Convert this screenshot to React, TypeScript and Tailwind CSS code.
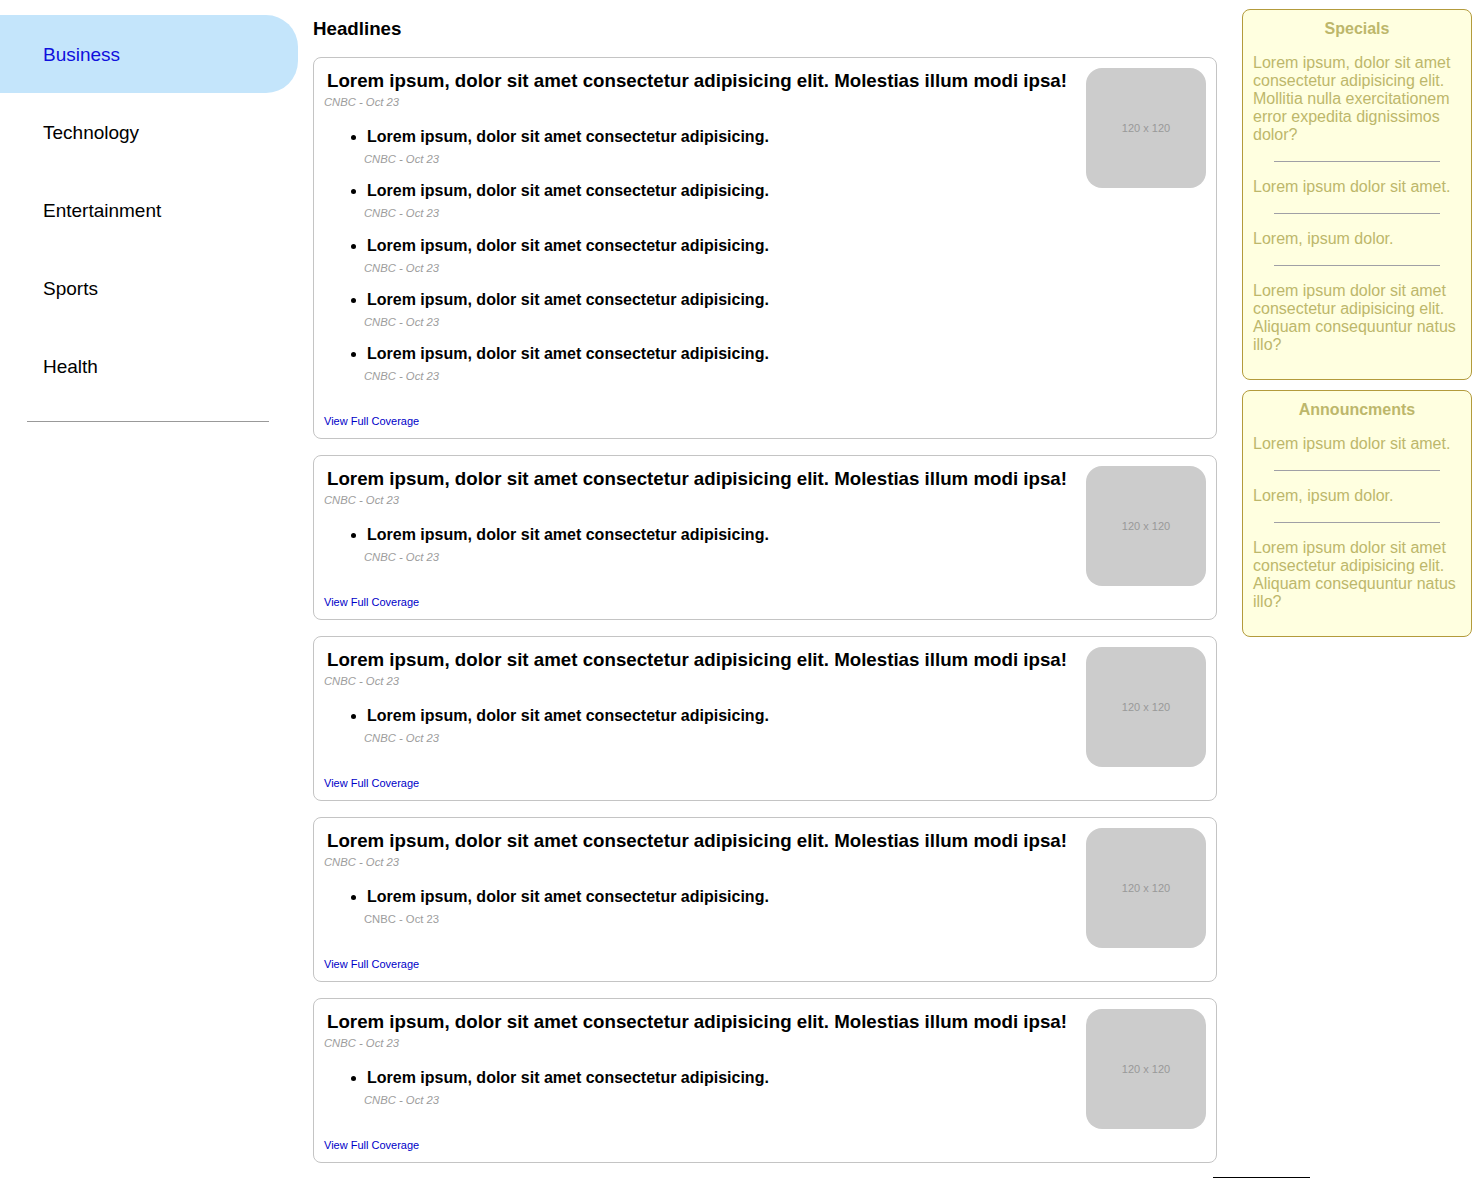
const categories = ["Business", "Technology", "Entertainment", "Sports", "Health"];

const stories = [
  { subs: 5, italic: true },
  { subs: 1, italic: true },
  { subs: 1, italic: true },
  { subs: 1, italic: false },
  { subs: 1, italic: true },
];

const specials = [
  "Lorem ipsum, dolor sit amet consectetur adipisicing elit. Mollitia nulla exercitationem error expedita dignissimos dolor?",
  "Lorem ipsum dolor sit amet.",
  "Lorem, ipsum dolor.",
  "Lorem ipsum dolor sit amet consectetur adipisicing elit. Aliquam consequuntur natus illo?",
];

const announcements = [
  "Lorem ipsum dolor sit amet.",
  "Lorem, ipsum dolor.",
  "Lorem ipsum dolor sit amet consectetur adipisicing elit. Aliquam consequuntur natus illo?",
];

function SideBox({ title, items }: { title: string; items: string[] }) {
  return (
    <div className="border border-[#b39b3c] bg-[#ffffe0] rounded-lg px-[10px] pt-[10px] pb-[25px] text-[#bdb76b] text-[16px] leading-[18px]">
      <h4 className="font-bold text-center mb-4">{title}</h4>
      {items.map((t, i) => (
        <div key={i}>
          {i > 0 && <hr className="w-[80%] mx-auto mt-[17px] mb-[16px] border-0 border-t border-[#a0a0a6]" />}
          <p>{t}</p>
        </div>
      ))}
    </div>
  );
}

function StoryCard({ subs, italic }: { subs: number; italic: boolean }) {
  return (
    <div className="border border-[#c4c4c4] rounded-lg p-[10px] flex gap-4 mb-4">
      <div className="flex-1">
        <h3 className="text-[18.72px] font-bold leading-[26px] pl-[3px] text-black">
          Lorem ipsum, dolor sit amet consectetur adipisicing elit. Molestias illum modi ipsa!
        </h3>
        <p className="text-[11.25px] italic leading-[16px] text-[#9d9d9d]">CNBC - Oct 23</p>
        <ul className="list-disc pl-[43px] mt-[18px] text-[16px] leading-[18px]">
          {Array.from({ length: subs }).map((_, i) => (
            <li key={i} className={`leading-[18px] ${i > 0 ? "mt-[15.25px]" : ""}`}>
              <p className="text-[16px] font-bold leading-[18px] text-black">
                Lorem ipsum, dolor sit amet consectetur adipisicing.
              </p>
              <p className={`text-[11.25px] leading-[16px] text-[#9d9d9d] mt-[5px] -ml-[3px] ${italic ? "italic" : ""}`}>
                CNBC - Oct 23
              </p>
            </li>
          ))}
        </ul>
        <a href="#" className="block mt-[30px] text-[11px] leading-[14px] text-[#0000c8]">
          View Full Coverage
        </a>
      </div>
      <div className="w-[120px] h-[120px] shrink-0 rounded-2xl bg-[#cccccc] flex items-center justify-center text-[11px] text-[#999999]">
        120 x 120
      </div>
    </div>
  );
}

export default function App() {
  return (
    <div className="bg-white min-h-screen font-['Liberation_Sans',Arial,sans-serif]">
      <div className="flex items-start">
        <nav className="w-[298px] shrink-0 pt-[15px]">
          {categories.map((c, i) => (
            <div
              key={c}
              className={`h-[78px] flex items-center pl-[43px] pt-[2px] text-[19px] ${
                i === 0 ? "bg-[#c4e5fb] rounded-r-[32px] text-[#1010dd]" : "text-black"
              }`}
            >
              {c}
            </div>
          ))}
          <hr className="mt-[16px] ml-[27px] w-[242px] border-0 border-t border-[#999999]" />
        </nav>

        <main className="w-[904px] ml-[15px] pt-[18px]">
          <h3 className="text-[18.72px] font-bold leading-[22px] mb-[17px] text-black">Headlines</h3>
          {stories.map((s, i) => (
            <StoryCard key={i} subs={s.subs} italic={s.italic} />
          ))}
        </main>

        <aside className="w-[230px] ml-[25px] pt-[9px] flex flex-col gap-[10px]">
          <SideBox title="Specials" items={specials} />
          <SideBox title="Announcments" items={announcements} />
        </aside>
      </div>
      <div className="ml-[1213px] w-[97px] h-[2px] bg-black -mt-[2px]" />
    </div>
  );
}
